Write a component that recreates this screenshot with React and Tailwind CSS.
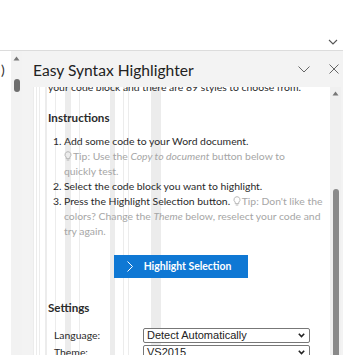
import React from "react";

const Bulb = () => (
  <svg width="8" height="10" viewBox="0 0 8 10" className="inline-block align-[-1px] mr-[1px]" fill="none" stroke="#b0b0b0" strokeWidth="0.9">
    <path d="M4 0.7a3 3 0 0 0-1.8 5.4v1.5h3.6V6.1A3 3 0 0 0 4 0.7z" />
    <path d="M2.7 9h2.6" />
  </svg>
);

const Stripes = () => {
  const xs = [0, 3, 6, 12, 13, 22, 32, 33, 34, 35, 36, 37, 46, 77, 78, 79, 80, 81, 90, 95, 118, 119, 120, 121, 122, 123, 124, 125, 126, 127];
  return (
    <div className="absolute inset-0 pointer-events-none">
      {xs.map((x, i) => (
        <div key={i} className="absolute top-0 bottom-0 w-px bg-[#ececec]" style={{ left: x }} />
      ))}
    </div>
  );
};

const Select = ({ value }) => (
  <div className="w-[167px] h-[15px] border border-[#777] rounded-[2px] bg-white flex items-center justify-between pl-[3px] pr-[4px] text-[11px] leading-none text-[#222]" style={{ fontFamily: '"Liberation Sans", Arial, sans-serif' }}>
    <span>{value}</span>
    <svg width="7" height="5" viewBox="0 0 7 5" fill="none" stroke="#222" strokeWidth="1.6"><path d="M0.8 0.8l2.7 2.7 2.7-2.7" /></svg>
  </div>
);

export default function App() {
  return (
    <div className="w-[343px] h-[355px] overflow-hidden bg-white flex flex-col" style={{ fontFamily: 'Lato, "Open Sans", sans-serif' }}>
      <div className="h-[51px] shrink-0 flex items-end justify-end pr-[5px] pb-[5px] border-b border-[#dcdcdc] shadow-[0_1px_2px_rgba(0,0,0,0.08)]">
        <svg width="10" height="6" viewBox="0 0 10 6" fill="none" stroke="#555" strokeWidth="1.1"><path d="M1 1l4 4 4-4" /></svg>
      </div>
      <div className="flex flex-1 min-h-0">
        <div className="w-[11px] shrink-0 bg-white text-[14px] text-[#333] pt-[12px] pl-[1px] leading-none">)</div>
        <div className="w-[11px] shrink-0 bg-[#f2f2f2] flex flex-col items-center pt-[5px]">
          <svg width="7" height="5" viewBox="0 0 7 5"><path d="M0.5 4.5L3.5 0.5 6.5 4.5z" fill="#777" /></svg>
          <div className="w-[6px] h-[13px] rounded-full bg-[#6e6e6e] mt-[18px]" />
        </div>
        <div className="flex-1 min-w-0 bg-[#f3f3f3] flex flex-col pl-[11px]">
          <div className="h-[36px] shrink-0 flex items-center">
            <div className="flex-1 text-[15.6px] text-[#222] pt-[3px]">Easy Syntax Highlighter</div>
            <svg width="12" height="7" viewBox="0 0 12 7" fill="none" stroke="#666" strokeWidth="1" className="mr-[19px] mt-[1px]"><path d="M0.5 0.5l5.5 5.5 5.5-5.5" /></svg>
            <svg width="10" height="10" viewBox="0 0 10 10" fill="none" stroke="#666" strokeWidth="1" className="mr-[4px]"><path d="M0.5 0.5l9 9M9.5 0.5l-9 9" /></svg>
          </div>
          <div className="flex-1 min-h-0 flex">
            <div className="flex-1 bg-white relative overflow-hidden">
              <Stripes />
              <div className="relative pl-[15px] pr-[6px] text-[10.4px] leading-[15px] text-[#2a2a2a]">
                <div className="mt-[-7px] whitespace-nowrap">your code block and there are 89 styles to choose from.</div>
                <div className="mt-[14px] font-bold text-[11.6px] leading-[18px]">Instructions</div>
                <ol className="mt-[7px] pl-[5px]">
                  <li className="flex">
                    <span className="w-[11px] shrink-0">1.</span>
                    <div className="pr-[8px]">
                      <div>Add some code to your Word document.</div>
                      <div className="text-[#a6a6a6]"><Bulb />Tip: Use the <i>Copy to document</i> button below to quickly test.</div>
                    </div>
                  </li>
                  <li className="flex">
                    <span className="w-[11px] shrink-0">2.</span>
                    <div>Select the code block you want to highlight.</div>
                  </li>
                  <li className="flex">
                    <span className="w-[11px] shrink-0">3.</span>
                    <div>Press the Highlight Selection button. <span className="text-[#a6a6a6]"><Bulb />Tip: Don't like the colors? Change the <i>Theme</i> below, reselect your code and try again.</span></div>
                  </li>
                </ol>
                <div className="flex justify-center mt-[16px] pr-[10px]">
                  <button className="w-[134px] h-[23px] bg-[#0f78d4] text-white text-[10.4px] font-bold flex items-center justify-center gap-[11px] pr-[4px]">
                    <svg width="6" height="11" viewBox="0 0 6 11" fill="none" stroke="white" strokeWidth="1"><path d="M0.5 0.5l5 5-5 5" /></svg>
                    Highlight Selection
                  </button>
                </div>
                <div className="mt-[21px] font-bold text-[11.6px] leading-[18px]">Settings</div>
                <div className="mt-[11px] flex items-center pl-[6px]">
                  <span className="w-[89px]">Language:</span>
                  <Select value="Detect Automatically" />
                </div>
                <div className="mt-[2px] flex items-center pl-[6px]">
                  <span className="w-[89px]">Theme:</span>
                  <Select value="VS2015" />
                </div>
              </div>
            </div>
            <div className="w-[11px] shrink-0 bg-[#f0f0f0] flex flex-col items-center pt-[4px]">
              <svg width="7" height="5" viewBox="0 0 7 5"><path d="M0.5 4.5L3.5 0.5 6.5 4.5z" fill="#777" /></svg>
              <div className="w-[6px] flex-1 rounded-t-full bg-[#8a8a8a] mt-[93px]" />
            </div>
            <div className="w-[2px] shrink-0 bg-[#f3f3f3]" />
          </div>
        </div>
      </div>
    </div>
  );
}
